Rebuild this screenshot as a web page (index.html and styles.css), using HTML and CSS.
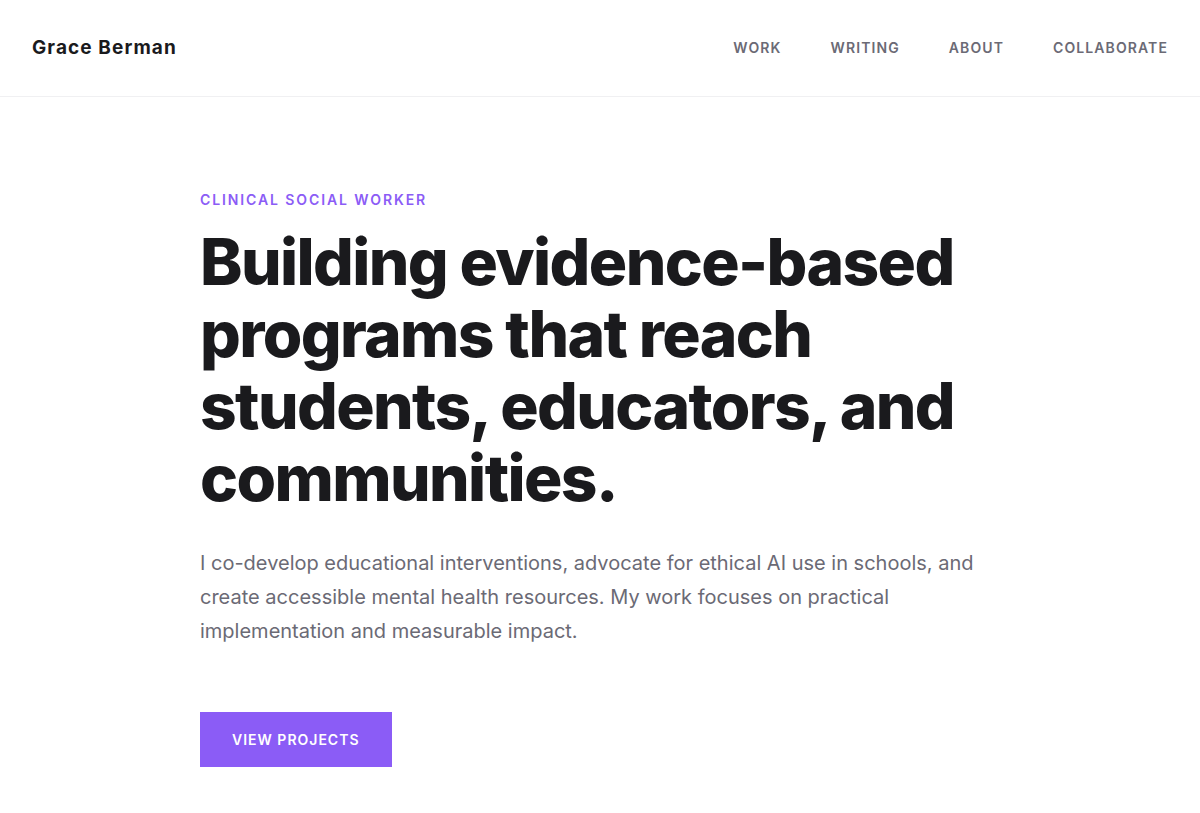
FILE: index.html
```html
<!DOCTYPE html>
<html lang="en">
<head>
<meta charset="utf-8">
<title>Grace Berman</title>
<link rel="stylesheet" href="styles.css">
</head>
<body>
<header class="site-header">
  <a class="logo" href="#">Grace Berman</a>
  <nav class="nav">
    <a href="#">WORK</a>
    <a href="#">WRITING</a>
    <a href="#">ABOUT</a>
    <a href="#">COLLABORATE</a>
  </nav>
</header>
<main class="hero">
  <p class="eyebrow">CLINICAL SOCIAL WORKER</p>
  <h1 class="title">Building evidence-based programs that reach students, educators, and communities.</h1>
  <p class="lead">I co-develop educational interventions, advocate for ethical AI use in schools, and create accessible mental health resources. My work focuses on practical implementation and measurable impact.</p>
  <a class="btn" href="#">VIEW PROJECTS</a>
</main>
</body>
</html>
```
FILE: styles.css
```css
* { box-sizing: border-box; }
html, body { margin: 0; padding: 0; background: #ffffff; }
body { font-family: Inter, "Noto Sans", sans-serif; color: #1a1a1d; }
a { text-decoration: none; }

.site-header {
  height: 97px;
  display: flex;
  align-items: center;
  justify-content: space-between;
  padding: 0 32px 2px;
  border-bottom: 1px solid #f0f0f2;
}
.logo {
  font-size: 19px;
  font-weight: 700;
  color: #1a1a1d;
  letter-spacing: 1.1px;
}
.nav { display: flex; gap: 49px; }
.nav a {
  font-size: 14px;
  font-weight: 600;
  letter-spacing: 1.1px;
  color: #6b6a75;
}

.hero {
  padding: 93px 0 0 200px;
  max-width: 1000px;
}
.eyebrow {
  margin: 0;
  font-size: 14px;
  font-weight: 600;
  letter-spacing: 1.9px;
  color: #8b5cf6;
  line-height: 20px;
}
.title {
  margin: 16px 0 0;
  font-size: 64px;
  line-height: 72px;
  font-weight: 800;
  letter-spacing: -1.6px;
  color: #1a1a1d;
  max-width: 800px;
}
.lead {
  margin: 32px 0 0;
  font-size: 20px;
  line-height: 34px;
  color: #6b6a75;
  max-width: 790px;
}
.btn {
  display: inline-flex;
  align-items: center;
  margin-top: 64px;
  height: 55px;
  padding: 0 32px;
  background: #8b5cf6;
  color: #ffffff;
  font-size: 14px;
  font-weight: 600;
  letter-spacing: 1px;
}
```
